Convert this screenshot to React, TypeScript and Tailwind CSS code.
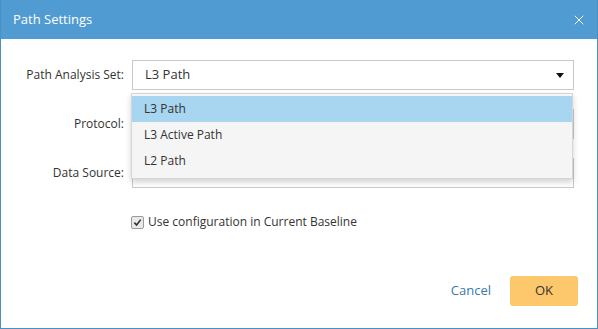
import React from "react";
import { X } from "lucide-react";

const options = ["L3 Path", "L3 Active Path", "L2 Path"];

const Field: React.FC<{ label: string; value?: string; arrow?: boolean }> = ({ label, value, arrow }) => (
  <div className="flex items-center">
    <div className="w-[124px] pr-[1px] text-right text-[12px] text-[#333]">{label}</div>
    <div className="ml-[7px] flex h-[30px] w-[442px] items-center justify-between border border-[#c9c9c9] bg-white pl-[12px] pr-[9px] text-[13px] text-[#333]">
      <span>{value}</span>
      {arrow && <span className="h-0 w-0 border-x-[4px] border-t-[5px] border-x-transparent border-t-[#111]" />}
    </div>
  </div>
);

export default function App() {
  return (
    <div
      className="relative flex h-[329px] w-[598px] flex-col border-x border-b border-[#4b90c4] bg-white"
      style={{ fontFamily: '"Open Sans", "Segoe UI", sans-serif' }}
    >
      {/* header */}
      <div className="flex h-[39px] items-center justify-between bg-[#4f9bd2] pl-[12px] pr-[10px]">
        <span className="text-[13px] text-white">Path Settings</span>
        <X className="h-[16px] w-[16px] text-white" strokeWidth={1.5} />
      </div>

      {/* form */}
      <div className="relative flex flex-col gap-[19px] pt-[21px]">
        <Field label="Path Analysis Set:" value="L3 Path" arrow />
        <Field label="Protocol:" />
        <Field label="Data Source:" />

        {/* open dropdown */}
        <div className="absolute left-[130px] top-[54px] w-[442px] border border-[#d6d6d6] bg-[#f5f5f5] pt-[2px] pb-[4px] shadow-[0_3px_6px_rgba(0,0,0,0.18)]">
          {options.map((o, i) => (
            <div
              key={o}
              className={`flex h-[26px] items-center pl-[12px] text-[12px] text-[#333] ${i === 0 ? "bg-[#a8d5f0]" : ""}`}
            >
              {o}
            </div>
          ))}
        </div>
      </div>

      {/* checkbox */}
      <div className="ml-[130px] mt-[25px] flex items-center gap-[4px]">
        <span className="flex h-[13px] w-[13px] items-center justify-center rounded-[2px] border border-[#9a9a9a] bg-[#e9e9e9]">
          <svg viewBox="0 0 10 10" className="h-[9px] w-[9px]">
            <path d="M1.5 5.2 L4 7.8 L8.6 1.8" fill="none" stroke="#333" strokeWidth="1.8" />
          </svg>
        </span>
        <span className="text-[12px] text-[#333]">Use configuration in Current Baseline</span>
      </div>

      {/* footer */}
      <div className="mt-auto mb-[22px] flex items-center justify-end gap-[19px] pr-[19px]">
        <span className="text-[13px] text-[#3b78ad]">Cancel</span>
        <button className="h-[30px] w-[68px] rounded-[3px] bg-[#fdc76b] text-[13px] text-[#333]">OK</button>
      </div>
    </div>
  );
}
